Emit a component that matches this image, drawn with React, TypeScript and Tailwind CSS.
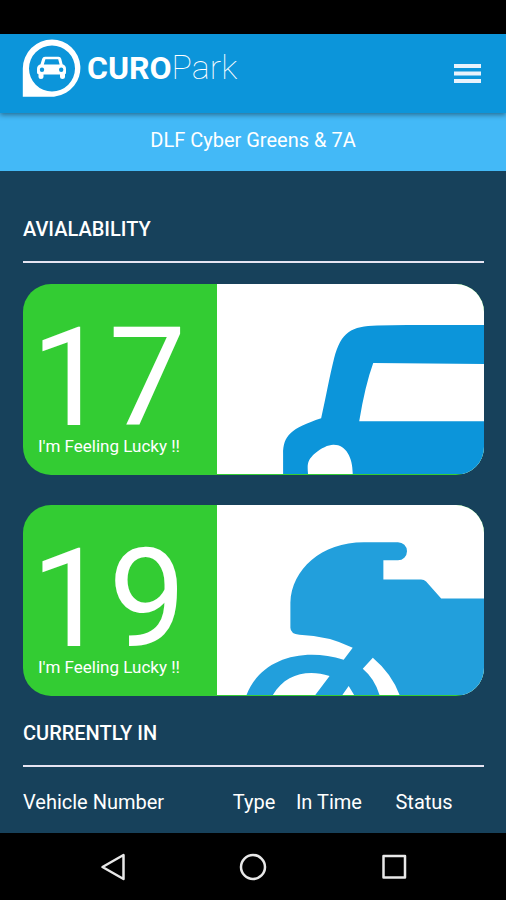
import type { ReactNode } from "react";

function LogoMark() {
  return (
    <svg width="59" height="58" viewBox="0 0 59 58" aria-hidden="true">
      <path
        fill="#fff"
        fillRule="evenodd"
        d="M30 0.5A28.500 28.500 0 0 1 34 57.200L32 57.700H0.800V29.500A29.200 29 0 0 1 30 0.500ZM30 6.500A23 23 0 1 0 30 52.500A23 23 0 1 0 30 6.500Z"
      />
      <path
        fill="#fff"
        fillRule="evenodd"
        d="M23 17.700H36.500Q38.600 17.700 39.200 19.700L40.600 25.300Q44 26.500 44 30V33.500Q44 35 43 35.300V38Q43 40 40.500 40Q38 40 38 38V35.500H21.500V38Q21.500 40 19 40Q16.500 40 16.500 38V35.300Q15 35 15 33.500V30Q15 26.500 18.500 25.300L20.200 19.700Q20.800 17.700 23 17.700ZM23.400 20.300L21.800 25.500H37.600L36.200 20.300ZM20 28.600A2.200 2.200 0 1 0 20 33A2.200 2.200 0 1 0 20 28.600ZM39.200 28.600A2.200 2.200 0 1 0 39.200 33A2.200 2.200 0 1 0 39.200 28.600Z"
      />
    </svg>
  );
}

function CarArt() {
  return (
    <svg
      className="block h-full w-full"
      viewBox="0 0 267 190"
      preserveAspectRatio="xMinYMin slice"
      aria-hidden="true"
    >
      <path
        fill="#0c95da"
        fillRule="evenodd"
        d="M66 191V170C66 151 74 144 104 134C109 112 112 94 117 74C124 48 134 42 160 41.500Q175 41 190 41H268V191H135.500C136 174 129 160 116 160.500C111 160.500 104 164 98 169C90 176 90 180 91 191ZM156 79Q148 101 142 137H268V80Z"
      />
    </svg>
  );
}

function BikeArt() {
  return (
    <svg
      className="block h-full w-full"
      viewBox="0 0 267 189"
      preserveAspectRatio="xMinYMin slice"
      aria-hidden="true"
    >
      <path
        fill="#229fdc"
        fillRule="evenodd"
        d="M73 122V97C74 64 104 37 146 37H180A9 9 0 0 1 180 55H165.500V74H203Q206 74 208 76L223 93H268V190H182Q174 168 155 152L145 163Q157 173 162 190H137L131 180L124 190H97L112 170C90 163 67 168 55 190H29C42 154 84 141 126 154L135 142Q111 130 82 129Q73 128 73 122Z"
      />
    </svg>
  );
}

function SectionTitle({ children }: { children: ReactNode }) {
  return (
    <h2 className="border-b-2 border-[#e6e4f2] pb-5 text-[20px] leading-6 font-medium">
      {children}
    </h2>
  );
}

function SpotCard({ count, children }: { count: number; children: ReactNode }) {
  return (
    <article className="flex h-[191px] overflow-hidden rounded-[28px] bg-[#33cc33]">
      <div className="flex w-[42%] shrink-0 flex-col px-[15px] pt-[38px]">
        <p className="-ml-[7px] text-[138px] leading-[112px]">{count}</p>
        <p className="text-[17px] leading-6 whitespace-nowrap">I'm Feeling Lucky !!</p>
      </div>
      <div className="mb-px min-w-0 flex-1 bg-white">{children}</div>
    </article>
  );
}

export default function App() {
  return (
    <div className="flex min-h-screen flex-col bg-[#17415b] font-[Roboto,sans-serif] text-white">
      <div className="h-[34px] bg-black" />
      <header className="relative flex h-[79px] items-center justify-between bg-[#0c95da] pr-[25px] pb-3 pl-[22px] shadow-[0_2px_5px_rgba(0,0,0,0.4)]">
        <a href="#" className="flex items-center gap-[6px]" aria-label="CUROPark">
          <LogoMark />
          <span className="text-[34px] leading-10 font-thin whitespace-nowrap">
            <span className="text-[32px] font-bold">CURO</span>Park
          </span>
        </a>
        <button type="button" aria-label="Menu" className="mt-3">
          <svg width="27" height="19" viewBox="0 0 27 19" fill="#e9f3fc" aria-hidden="true">
            <path d="M0 0H27V4H0ZM0 7.500H27V11.500H0ZM0 15H27V19H0Z" />
          </svg>
        </button>
      </header>
      <div className="h-[58px] bg-[#43b9f7] pt-[15px] text-center text-[20px] leading-6">
        DLF Cyber Greens &amp; 7A
      </div>

      <main className="flex-1 px-[22px] pt-[46px] pl-[23px]">
        <SectionTitle>AVIALABILITY</SectionTitle>
        <div className="mt-[21px] flex flex-col gap-[30px]">
          <SpotCard count={17}>
            <CarArt />
          </SpotCard>
          <SpotCard count={19}>
            <BikeArt />
          </SpotCard>
        </div>
        <div className="mt-[25px]">
          <SectionTitle>CURRENTLY IN</SectionTitle>
        </div>
        <table className="mt-[23px] w-full table-fixed text-left text-[20px] leading-6">
          <thead>
            <tr>
              <th className="w-[45.5%] p-0 font-normal">Vehicle Number</th>
              <th className="w-[13.7%] p-0 font-normal">Type</th>
              <th className="w-[21.6%] p-0 font-normal">In Time</th>
              <th className="p-0 font-normal">Status</th>
            </tr>
          </thead>
        </table>
      </main>

      <nav className="grid h-[67px] grid-cols-3 items-center justify-items-center bg-black px-[42px]">
        <button type="button" aria-label="Back">
          <svg width="28" height="28" viewBox="0 0 28 28" fill="none" stroke="#e8e8e8" strokeWidth="2.500" strokeLinejoin="round" aria-hidden="true">
            <path d="M25.500 2V26L4.500 14Z" />
          </svg>
        </button>
        <button type="button" aria-label="Home">
          <svg width="28" height="28" viewBox="0 0 28 28" fill="none" stroke="#e8e8e8" strokeWidth="2.500" aria-hidden="true">
            <circle cx="14" cy="14" r="12" />
          </svg>
        </button>
        <button type="button" aria-label="Recent apps">
          <svg width="28" height="28" viewBox="0 0 28 28" fill="none" stroke="#e8e8e8" strokeWidth="2.500" strokeLinejoin="round" aria-hidden="true">
            <path d="M3.500 3H25V24.500H3.500Z" />
          </svg>
        </button>
      </nav>
    </div>
  );
}
